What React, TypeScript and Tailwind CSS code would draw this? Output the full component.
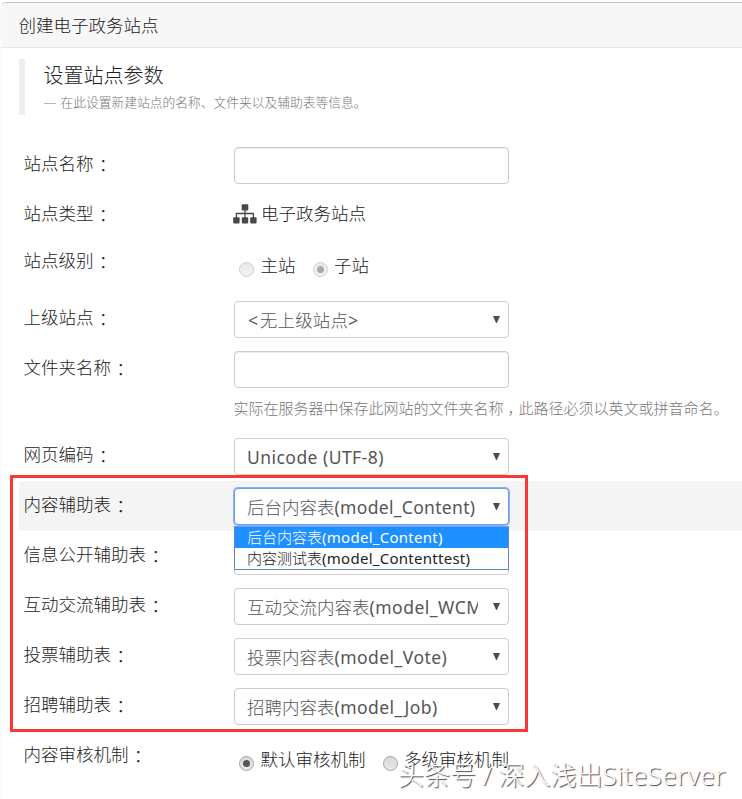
import React from 'react';
import clsx from 'clsx';

interface RowProps {
  label: string;
  height: string;
  active?: boolean;
  children?: React.ReactNode;
}

const Row: React.FC<RowProps> = ({ label, height, active, children }) => (
  <div className={clsx('flex shrink-0', height, active && 'bg-[#f4f4f4]')}>
    <div className="w-[215px] shrink-0 pl-[4.5px] pt-[11px] leading-6 whitespace-nowrap">
      {label}
      <span className="relative top-[2px] left-px font-['Noto_Sans_CJK_TC',sans-serif]">：</span>
    </div>
    <div className="relative pt-[7px]">{children}</div>
  </div>
);

// Latin runs are set heavier and a little wider than the Chinese glyphs
const MixedText: React.FC<{ text: string }> = ({ text }) => (
  <>
    {text.split(/([\x20-\x7e]+)/).map((part, i) =>
      i % 2 ? (
        <span key={i} className="font-normal tracking-[0.018em]">{part}</span>
      ) : (
        part
      )
    )}
  </>
);

const TextInput: React.FC = () => (
  <input
    type="text"
    className="block w-[275px] h-[37px] rounded-[4px] border border-[#ccc] bg-white shadow-[inset_0_1px_1px_rgba(0,0,0,0.075)] outline-none"
  />
);

interface SelectBoxProps {
  value: string;
  focused?: boolean;
  textClass?: string;
}

const SelectBox: React.FC<SelectBoxProps> = ({ value, focused, textClass }) => (
  <div
    className={clsx(
      'flex items-center w-[275px] h-[37px] rounded-[4px] border bg-white pl-3 pr-2 text-[#555]',
      focused ? 'border-[#6f9fec] ring-1 ring-[#86b0f7]' : 'border-[#ccc]'
    )}
  >
    <span className={clsx('w-[231px] overflow-hidden whitespace-nowrap leading-[30px] pt-px', textClass)}>
      <MixedText text={value} />
    </span>
    <svg className="ml-auto mb-px w-[7px] h-[7px] shrink-0" viewBox="0 0 7 7">
      <path d="M0 0H7L3.9 7H3.1Z" fill="#4d4d4d" />
    </svg>
  </div>
);

interface RadioProps {
  label: string;
  checked?: boolean;
  disabled?: boolean;
}

const Radio: React.FC<RadioProps> = ({ label, checked, disabled }) => (
  <label className="flex items-start">
    <span
      className={clsx(
        'mt-[9px] mr-[7px] flex items-center justify-center w-[15px] h-[15px] rounded-full border',
        disabled
          ? 'border-[#cfcfcf] bg-linear-to-b from-[#e9e9e9] to-[#f3f3f3]'
          : 'border-[#a5a5a5] bg-linear-to-b from-[#d9d9d9] to-[#e8e8e8]'
      )}
    >
      {checked && <span className={clsx('w-[7px] h-[7px] rounded-full', disabled ? 'bg-[#aaa]' : 'bg-[#555]')} />}
    </span>
    <span className="-ml-[0.5px] leading-6 whitespace-nowrap">{label}</span>
  </label>
);

const Sitemap: React.FC = () => (
  <svg className="w-6 h-5 mr-1 -ml-px" viewBox="0 0 24 20" fill="#484848">
    <rect x="8.7" y="0.2" width="6.6" height="6.3" rx="1" />
    <rect x="0.2" y="13.2" width="6.4" height="6.4" rx="1" />
    <rect x="8.8" y="13.2" width="6.4" height="6.4" rx="1" />
    <rect x="17.2" y="13.2" width="6.4" height="6.4" rx="1" />
    <path d="M3.4 14V9.5H20.4V14M12 6V14" fill="none" stroke="#484848" strokeWidth="1.3" />
  </svg>
);

const App: React.FC = () => {
  return (
    <div className="relative w-[742px] h-[799px] overflow-hidden bg-white font-light text-[17.5px] text-[#222] font-['Noto_Sans','Noto_Sans_CJK_SC',sans-serif]">
      <div className="mt-[2px] h-[797px] flex flex-col rounded-tl-[6px] border-t border-l border-t-[#c4c4c4] border-l-[#fafafa]">
        <header className="h-[45px] shrink-0 pl-[17.5px] pt-[10px] leading-6 rounded-tl-[5px] bg-[#f7f7f7] border-b border-[#e8e8e8]">
          创建电子政务站点
        </header>

        <div className="ml-[18px] flex flex-col">
          <div className="mt-[11px] mb-[25px] h-14 shrink-0 border-l-[6px] border-[#eee] pl-[18.5px]">
            <h1 className="pt-px text-[20px] leading-8">设置站点参数</h1>
            <p className="-mt-px text-[12.75px] leading-[22px] text-[#777] whitespace-nowrap">
              <span className="inline-block w-[17px]">—</span>在此设置新建站点的名称、文件夹以及辅助表等信息。
            </p>
          </div>

          <Row label="站点名称" height="h-[50px]">
            <TextInput />
          </Row>
          <Row label="站点类型" height="h-[47px]">
            <div className="flex items-center h-[34px]">
              <Sitemap />
              <span className="-mt-[2px]">电子政务站点</span>
            </div>
          </Row>
          <Row label="站点级别" height="h-[57px]">
            <div className="flex gap-[17px] pl-[5px] pt-[9px]">
              <Radio label="主站" disabled />
              <Radio label="子站" disabled checked />
            </div>
          </Row>
          <Row label="上级站点" height="h-[50px]">
            <SelectBox value="<无上级站点>" textClass="pl-px tracking-[0.2px] [&>span]:tracking-[0.1em]" />
          </Row>
          <Row label="文件夹名称" height="h-[87px]">
            <TextInput />
            <p className="mt-2 -ml-[0.5px] text-[15px] leading-6 text-[#777] whitespace-nowrap">
              实际在服务器中保存此网站的文件夹名称
              <span className="inline-block w-[15px] pl-1">，</span>
              此路径必须以英文或拼音命名。
            </p>
          </Row>
          <Row label="网页编码" height="h-[50px]">
            <SelectBox value="Unicode (UTF-8)" textClass="[&>span]:tracking-[0.026em]" />
          </Row>
          <Row label="内容辅助表" height="h-[50px]" active>
            <SelectBox value="后台内容表(model_Content)" focused />
            <ul className="absolute z-10 left-0 top-[45px] w-[275px] h-[44px] border border-t-[#6f9fec] border-[#6285c4] bg-white text-[15px] leading-[21px] text-[#222]">
              <li className="h-[21px] pl-3 bg-[#1e90ff] text-white">
                <MixedText text="后台内容表(model_Content)" />
              </li>
              <li className="h-[21px] pl-3">
                <MixedText text="内容测试表(model_Contenttest)" />
              </li>
            </ul>
          </Row>
          <Row label="信息公开辅助表" height="h-[50px]">
            <SelectBox value="" />
          </Row>
          <Row label="互动交流辅助表" height="h-[50px]">
            <SelectBox value="互动交流内容表(model_WCM)" textClass="[&>span]:tracking-[0.028em]" />
          </Row>
          <Row label="投票辅助表" height="h-[50px]">
            <SelectBox value="投票内容表(model_Vote)" textClass="[&>span]:tracking-[0.026em]" />
          </Row>
          <Row label="招聘辅助表" height="h-[50px]">
            <SelectBox value="招聘内容表(model_Job)" textClass="[&>span]:tracking-[0.026em]" />
          </Row>
          <Row label="内容审核机制" height="h-[50px]">
            <div className="flex gap-[17px] pl-[5px] pt-[9px]">
              <Radio label="默认审核机制" checked />
              <Radio label="多级审核机制" />
            </div>
          </Row>
        </div>
      </div>

      {/* highlight frame around the auxiliary tables */}
      <div className="absolute z-20 left-[10px] top-[475px] w-[518px] h-[257px] border-[3px] border-[#fc3636] pointer-events-none" />

      {/* watermark */}
      <div className="absolute z-20 left-[398px] top-[757px] text-[26px] leading-9 text-white whitespace-nowrap [text-shadow:1px_1px_1px_#444]">
        头条号 / 深入浅出<span className="tracking-[0.4px]">SiteServer</span>
      </div>
    </div>
  );
};

export default App;
